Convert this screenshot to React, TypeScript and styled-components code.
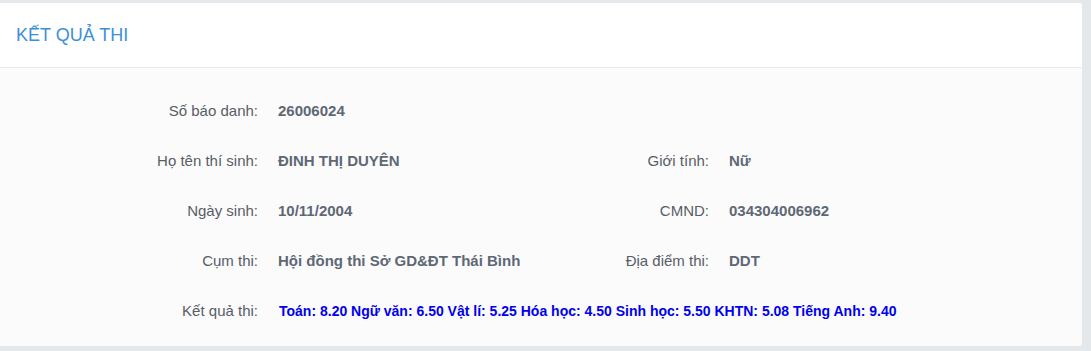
import React from "react";
import styled, { createGlobalStyle } from "styled-components";

const GlobalStyle = createGlobalStyle`
  html, body {
    margin: 0;
    padding: 0;
    background: #e5e8eb;
    font-family: "Liberation Sans", Arial, sans-serif;
  }
`;

const Page = styled.div`
  padding: 3px 9px 5px 0;
`;

const Card = styled.div`
  background: #fbfbfb;
  border-radius: 0 3px 3px 0;
  overflow: hidden;
`;

const Header = styled.div`
  height: 64px;
  background: #ffffff;
  border-bottom: 1px solid #e7eaee;
  display: flex;
  align-items: center;
  padding: 0 16px;
`;

const Title = styled.h3`
  margin: 0;
  font-size: 18px;
  font-weight: 400;
  color: #3d8fd8;
  letter-spacing: 0;
`;

const Body = styled.div`
  padding: 31px 0 23px;
  display: grid;
  grid-template-columns: 258px 193px 258px 1fr;
  row-gap: 26px;
`;

const Label = styled.div`
  text-align: right;
  font-size: 15px;
  line-height: 24px;
  color: #585d66;
  white-space: nowrap;
`;

const Value = styled.div<{ $wide?: boolean }>`
  padding-left: 20px;
  font-size: 15px;
  line-height: 24px;
  font-weight: 700;
  color: #5e6875;
  white-space: nowrap;
  grid-column: ${(p) => (p.$wide ? "2 / span 3" : "auto")};
`;

const Scores = styled(Value)`
  padding-left: 21px;
  font-size: 14px;
  color: #0000ee;
`;

const Empty = styled.div``;

export default function App() {
  return (
    <>
      <GlobalStyle />
      <Page>
        <Card>
          <Header>
            <Title>KẾT QUẢ THI</Title>
          </Header>
          <Body>
            <Label>Số báo danh:</Label>
            <Value>26006024</Value>
            <Empty />
            <Empty />

            <Label>Họ tên thí sinh:</Label>
            <Value>ĐINH THỊ DUYÊN</Value>
            <Label>Giới tính:</Label>
            <Value>Nữ</Value>

            <Label>Ngày sinh:</Label>
            <Value>10/11/2004</Value>
            <Label>CMND:</Label>
            <Value>034304006962</Value>

            <Label>Cụm thi:</Label>
            <Value>Hội đồng thi Sở GD&amp;ĐT Thái Bình</Value>
            <Label>Địa điểm thi:</Label>
            <Value>DDT</Value>

            <Label>Kết quả thi:</Label>
            <Scores $wide>
              Toán: 8.20 Ngữ văn: 6.50 Vật lí: 5.25 Hóa học: 4.50 Sinh học: 5.50 KHTN: 5.08 Tiếng Anh: 9.40
            </Scores>
          </Body>
        </Card>
      </Page>
    </>
  );
}
